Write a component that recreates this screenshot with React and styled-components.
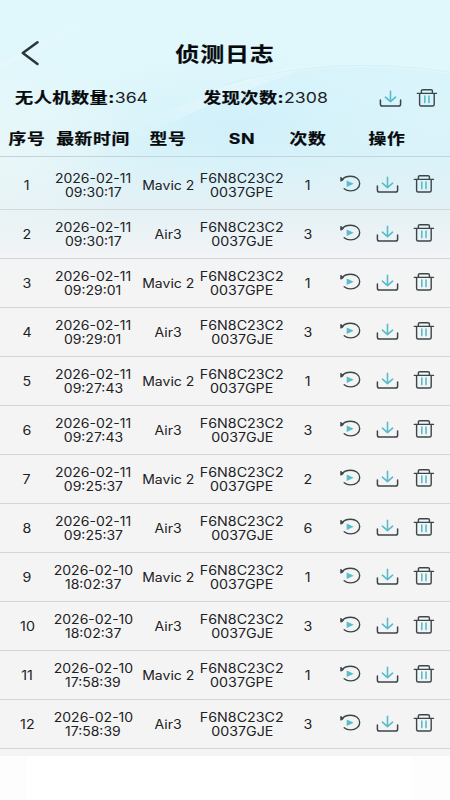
import React from 'react';
import styled, { createGlobalStyle } from 'styled-components';

const GlobalStyle = createGlobalStyle`
  * { box-sizing: border-box; }
  body { margin: 0; background: #fefefe; }
`;

const Screen = styled.div`
  width: 450px;
  height: 800px;
  display: flex;
  flex-direction: column;
  overflow: hidden;
  color: #1c2124;
  font-family: Inter, "Noto Sans CJK SC", sans-serif;
  background: linear-gradient(90deg, #fdfdfd 27px, #ffffff 27px 412px, #fdfdfd 412px);
`;

const Content = styled.main`
  position: relative;
  isolation: isolate;
  height: 756px;
  flex: none;
  background: #f4f4f4;
`;

const Backdrop = styled.svg`
  position: absolute;
  inset: 0;
  z-index: -1;
`;

const TitleBar = styled.header`
  display: grid;
  grid-template-columns: 60px 1fr 60px;
  align-items: center;
  height: 52px;
  margin-top: 28px;
`;

const BackButton = styled.button`
  display: flex;
  padding: 0 0 2px 20px;
  border: 0;
  background: none;
`;

const Title = styled.h1`
  margin: 0;
  padding-top: 2px;
  color: #060a0c;
  font-size: 20px;
  font-weight: 700;
  line-height: 28px;
  text-align: center;
  letter-spacing: 0.7px;
  transform: scaleX(1.2);
  -webkit-text-stroke: 0.2px #060a0c;
`;

const Summary = styled.section`
  display: grid;
  grid-template-columns: 188px 176px 1fr;
  align-items: center;
  height: 36px;
  padding-left: 15px;
`;

const Stat = styled.div`
  display: flex;
  align-items: baseline;
  justify-self: start;
  font-size: 15px;
  line-height: 22px;
  white-space: nowrap;
  transform: scaleX(1.21);
  transform-origin: left;
`;

const StatLabel = styled.span`
  color: #060a0c;
  font-weight: 700;
  letter-spacing: 0.4px;
  -webkit-text-stroke: 0.2px #060a0c;
`;

const StatValue = styled.span`
  font-size: 14.6px;
  font-weight: 400;
`;

const BulkActions = styled.div`
  display: flex;
  gap: 14px;
`;

const columns = '54px 78px 72px 76px 56px 114px';

const HeadRow = styled.div`
  display: grid;
  grid-template-columns: ${columns};
  align-items: center;
  height: 41px;
  padding-top: 6px;
  border-bottom: 1px solid #c3d4d9;
`;

const HeadCell = styled.div`
  color: #060a0c;
  font-size: 14.6px;
  font-weight: 700;
  line-height: 20px;
  text-align: center;
  white-space: nowrap;
  letter-spacing: 0.5px;
  transform: translateX(${(p) => p.$shift || 0}px) scaleX(1.22);
  -webkit-text-stroke: 0.2px #060a0c;
`;

const Row = styled.div`
  display: grid;
  grid-template-columns: ${columns};
  align-items: center;
  height: 49px;
  border-bottom: 1px solid #d3d6d7;

  &:first-child {
    height: 53px;
    padding-top: 4px;
  }
`;

const Cell = styled.div`
  display: flex;
  flex-direction: column;
  align-items: center;
  padding-top: 2px;
  font-size: 12.5px;
  line-height: 14px;
  white-space: nowrap;
`;

const Line = styled.span`
  display: block;
  transform: scaleX(${(p) => p.$stretch || 1.14});
`;

const RowActions = styled.div`
  display: flex;
  align-items: center;
  gap: 14px;
  padding-left: 3px;
  margin-top: -2px;
`;

const IconButton = styled.button`
  display: flex;
  padding: 0;
  border: 0;
  background: none;
`;

const ink = '#3b4649';
const teal = '#57bccb';

const BackIcon = () => (
  <svg width="20" height="26" viewBox="0 0 20 26" fill="none" stroke="#2c3538" strokeWidth="2.5" strokeLinecap="round" strokeLinejoin="round">
    <path d="M17.5 2.2 2.8 13 17.5 24" />
  </svg>
);

const ReplayIcon = () => (
  <svg width="23" height="20" viewBox="0 0 23 20" fill="none">
    <path d="M3.2 5.4C5 3.3 8.2 2.2 11.6 2.2c5.2 0 9.1 3 9.1 7.3s-3.9 7.4-9.1 7.4c-2.6 0-4.8-.8-6.4-2.2" stroke={ink} strokeWidth="1.4" strokeLinecap="round" />
    <path d="M1.8 3.2v4l2.6-1.4z" fill={ink} stroke={ink} strokeLinejoin="round" />
    <path d="M7.7 6.4v6.6l7-3.3z" fill={teal} />
  </svg>
);

const DownloadIcon = () => (
  <svg width="23" height="20" viewBox="0 0 23 20" fill="none" strokeLinecap="round" strokeLinejoin="round">
    <path d="M1.4 12v4.2q0 1.8 2 1.8h16.2q2 0 2-1.8V12" stroke={ink} strokeWidth="1.5" />
    <path d="M11.5 3.2v10.2M6.4 9.2l5.1 4.4 5.1-4.4" stroke={teal} strokeWidth="1.6" />
  </svg>
);

const TrashIcon = () => (
  <svg width="22" height="20" viewBox="0 0 22 20" fill="none" strokeLinecap="round" strokeLinejoin="round">
    <path d="M1.3 5.4h19.2M5.4 5.2V2.8q0-1.1 1.4-1.1h8.2q1.4 0 1.4 1.1v2.4M3.6 5.6v10.9q0 1.5 1.7 1.5h11.2q1.7 0 1.7-1.5V5.6" stroke={ink} strokeWidth="1.4" />
    <path d="M8.8 8v6.6M13 8v6.6" stroke={teal} strokeWidth="1.6" />
  </svg>
);

const BackdropArt = () => (
  <Backdrop width="450" height="300" viewBox="0 0 450 300" fill="none">
    <defs>
      <linearGradient id="sky" x1="0" y1="0" x2="0" y2="1">
        <stop offset="0" stopColor="#e0f7fb" />
        <stop offset="0.3" stopColor="#e0f7fb" />
        <stop offset="0.52" stopColor="#dcf3f9" />
        <stop offset="0.69" stopColor="#e4f1f5" />
        <stop offset="0.87" stopColor="#f3f4f5" />
        <stop offset="1" stopColor="#f4f4f4" />
      </linearGradient>
      <radialGradient id="glow" cx="0.5" cy="0.5" r="0.5">
        <stop offset="0" stopColor="#c9eefa" stopOpacity="0.6" />
        <stop offset="1" stopColor="#d4f2fa" stopOpacity="0" />
      </radialGradient>
      <linearGradient id="streak" x1="0" y1="1" x2="1" y2="0">
        <stop offset="0" stopColor="#ffffff" stopOpacity="0" />
        <stop offset="0.6" stopColor="#f2fcfe" stopOpacity="0.4" />
        <stop offset="1" stopColor="#ffffff" stopOpacity="0" />
      </linearGradient>
      <linearGradient id="wave" x1="0" y1="0" x2="0" y2="1">
        <stop offset="0" stopColor="#cceefa" stopOpacity="0.35" />
        <stop offset="1" stopColor="#cceefa" stopOpacity="0" />
      </linearGradient>
      <radialGradient id="side">
        <stop offset="0" stopColor="#f1f9f8" stopOpacity="0.6" />
        <stop offset="1" stopColor="#f1f9f8" stopOpacity="0" />
      </radialGradient>
    </defs>
    <rect width="450" height="300" fill="url(#sky)" />
    <ellipse cx="240" cy="124" rx="190" ry="72" fill="url(#glow)" />
    <path d="M60 172C140 130 180 96 260 78Q350 58 450 74V230H60Z" fill="url(#wave)" />
    <ellipse cx="0" cy="155" rx="150" ry="100" fill="url(#side)" />
    <path d="M110 138C170 116 225 72 330 62C255 84 195 110 145 136Z" fill="url(#streak)" />
    <path d="M0 64Q40 46 82 20L78 26Q38 54 0 68Z" fill="#f0fbfd" fillOpacity="0.3" />
    <path d="M225 85Q330 54 450 72" stroke="#c9e6f0" strokeOpacity="0.45" />
  </Backdrop>
);

const log = [
  ['2026-02-11', '09:30:17', 'Mavic 2', '0037GPE', 1],
  ['2026-02-11', '09:30:17', 'Air3', '0037GJE', 3],
  ['2026-02-11', '09:29:01', 'Mavic 2', '0037GPE', 1],
  ['2026-02-11', '09:29:01', 'Air3', '0037GJE', 3],
  ['2026-02-11', '09:27:43', 'Mavic 2', '0037GPE', 1],
  ['2026-02-11', '09:27:43', 'Air3', '0037GJE', 3],
  ['2026-02-11', '09:25:37', 'Mavic 2', '0037GPE', 2],
  ['2026-02-11', '09:25:37', 'Air3', '0037GJE', 6],
  ['2026-02-10', '18:02:37', 'Mavic 2', '0037GPE', 1],
  ['2026-02-10', '18:02:37', 'Air3', '0037GJE', 3],
  ['2026-02-10', '17:58:39', 'Mavic 2', '0037GPE', 1],
  ['2026-02-10', '17:58:39', 'Air3', '0037GJE', 3],
];

export default function App() {
  return (
    <Screen>
      <GlobalStyle />
      <Content>
        <BackdropArt />
        <TitleBar>
          <BackButton aria-label="返回"><BackIcon /></BackButton>
          <Title>侦测日志</Title>
        </TitleBar>
        <Summary>
          <Stat><StatLabel>无人机数量:</StatLabel><StatValue>364</StatValue></Stat>
          <Stat><StatLabel>发现次数:</StatLabel><StatValue>2308</StatValue></Stat>
          <BulkActions>
            <IconButton aria-label="全部下载"><DownloadIcon /></IconButton>
            <IconButton aria-label="全部删除"><TrashIcon /></IconButton>
          </BulkActions>
        </Summary>
        <HeadRow>
          <HeadCell>序号</HeadCell>
          <HeadCell>最新时间</HeadCell>
          <HeadCell>型号</HeadCell>
          <HeadCell>SN</HeadCell>
          <HeadCell>次数</HeadCell>
          <HeadCell $shift={-6}>操作</HeadCell>
        </HeadRow>
        <div>
          {log.map(([date, time, model, serial, count], i) => (
            <Row key={i}>
              <Cell><Line>{i + 1}</Line></Cell>
              <Cell>
                <Line $stretch={1.12}>{date}</Line>
                <Line $stretch={1.12}>{time}</Line>
              </Cell>
              <Cell><Line $stretch={1.12}>{model}</Line></Cell>
              <Cell>
                <Line>F6N8C23C2</Line>
                <Line>{serial}</Line>
              </Cell>
              <Cell><Line>{count}</Line></Cell>
              <RowActions>
                <IconButton aria-label="回放"><ReplayIcon /></IconButton>
                <IconButton aria-label="下载"><DownloadIcon /></IconButton>
                <IconButton aria-label="删除"><TrashIcon /></IconButton>
              </RowActions>
            </Row>
          ))}
        </div>
      </Content>
    </Screen>
  );
}
